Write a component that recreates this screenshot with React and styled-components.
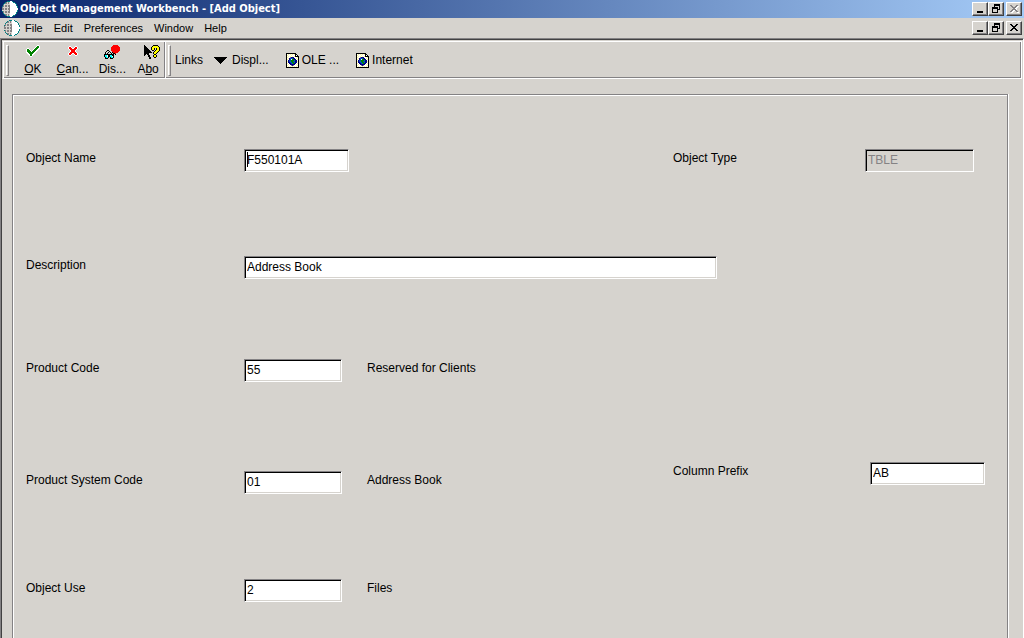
import styled, { createGlobalStyle, css } from 'styled-components';

const GlobalStyle = createGlobalStyle`
    * {
        box-sizing: border-box;
    }

    html, body, #root {
        height: 100%;
        margin: 0;
    }

    body {
        overflow: hidden;
        background-color: #D6D3CE;
        color: #000000;
        font-family: "Liberation Sans", Arial, sans-serif;
        font-size: 12px;
    }
`

const Window = styled.div`
    display: flex;
    flex-direction: column;
    height: 100%;
`

const TitleBar = styled.header`
    display: flex;
    align-items: center;
    height: 18px;
    padding: 0 2px;
    background: linear-gradient(90deg, #08246B, #A5CBF7);
`

const Title = styled.h1`
    flex: 1;
    margin: 0;
    padding-left: 2px;
    color: #FFFFFF;
    font-family: "DejaVu Sans Condensed", "DejaVu Sans", sans-serif;
    font-size: 11px;
    font-weight: 700;
    line-height: 18px;
    white-space: nowrap;
`

const MenuBar = styled.nav`
    display: flex;
    align-items: center;
    height: 20px;
    padding: 0 2px 0 4px;
`

const MenuItem = styled.button`
    margin: 0;
    padding: 0 6px 0 5px;
    border: none;
    background: none;
    color: #000000;
    font: 11px/18px "Liberation Sans", Arial, sans-serif;
`

const WindowControls = styled.div`
    display: flex;
    margin-left: auto;
`

const ControlButton = styled.button`
    width: 16px;
    height: 14px;
    margin-left: ${({ $apart }) => ($apart ? '2px' : '0')};
    padding: 0;
    border: 1px solid;
    border-color: #FFFFFF #404040 #404040 #FFFFFF;
    box-shadow: inset -1px -1px 0 #848284;
    background-color: #D6D3CE;
    line-height: 0;
`

const Workspace = styled.div`
    flex: 1;
    min-height: 0;
    display: flex;
    flex-direction: column;
    border-top: 1px solid #848284;
    border-left: 1px solid #848284;
    border-right: 1px solid #FFFFFF;
`

const Frame = styled.div`
    flex: 1;
    min-height: 0;
    display: flex;
    flex-direction: column;
    border-top: 1px solid #424142;
    border-left: 1px solid #424142;
    padding-top: 1px;
`

const ToolBar = styled.div`
    display: flex;
    height: 38px;
    margin-right: 1px;
    border: 1px solid;
    border-color: #FFFFFF #FFFFFF #FFFFFF #D6D3CE;
    box-shadow: inset -1px -1px 0 #848284;
`

const Band = styled.div`
    display: flex;
    align-items: center;
    padding-left: 2px;
    border-left: 1px solid #FFFFFF;
    ${({ $divided }) => $divided && css`
        width: 162px;
        border-right: 1px solid #848284;
    `}
`

const Grip = styled.span`
    width: 3px;
    height: 31px;
    border: 1px solid;
    border-color: #FFFFFF #848284 #848284 #FFFFFF;
`

const ToolButton = styled.button`
    display: flex;
    flex-direction: column;
    align-items: center;
    width: ${({ $clipped }) => ($clipped ? '32px' : '40px')};
    margin: 0;
    margin-left: ${({ $first }) => ($first ? '4px' : '0')};
    padding: 0;
    border: none;
    background: none;
    color: #000000;
    font: 12px/16px "Liberation Sans", Arial, sans-serif;
    white-space: nowrap;

    svg {
        height: 16px;
        margin-bottom: 1px;
        margin-left: ${({ $clipped }) => ($clipped ? '8px' : '0')};
    }
`

const LinksLabel = styled.span`
    padding: 0 11px 0 4px;
`

const LinkButton = styled.button`
    display: flex;
    align-items: center;
    gap: ${({ $menu }) => ($menu ? '5px' : '3px')};
    margin: 0 17px 0 0;
    padding: 0;
    border: none;
    background: none;
    color: #000000;
    font: 12px/16px "Liberation Sans", Arial, sans-serif;
`

const Panel = styled.form`
    flex: 1;
    min-height: 0;
    margin: 15px 15px 0 10px;
    border: 1px solid #848284;
    border-bottom: none;
    box-shadow: inset 1px 1px 0 #FFFFFF, 1px 0 0 #FFFFFF;
    padding: 54px 21px 0 13px;
    overflow: hidden;
`

const Rows = styled.div`
    display: grid;
    grid-template-rows: 107px 103px 103px 117px 40px;
`

const Row = styled.div`
    display: flex;
    align-items: flex-start;
    justify-content: space-between;
`

const Field = styled.div`
    display: flex;
    padding-top: ${({ $lowered }) => ($lowered ? '9px' : '0')};
`

const SideField = styled.div`
    display: flex;
    width: 313px;
`

const Label = styled.label`
    width: ${({ $width }) => $width}px;
    line-height: 18px;
`

const TextBox = styled.input`
    width: ${({ $width }) => $width}px;
    height: 23px;
    margin: 0;
    padding: 0 1px 2px 2px;
    border: 1px solid;
    border-color: #848284 #FFFFFF #FFFFFF #848284;
    border-radius: 0;
    outline: none;
    box-shadow: inset 1px 1px 0 #000000, inset -1px -1px 0 #D6D3CE;
    background-color: #FFFFFF;
    color: #000000;
    font: 12px/18px "Liberation Sans", Arial, sans-serif;

    &:disabled {
        background-color: #D6D3CE;
        color: #848284;
    }

    ${({ $caret }) => $caret && css`
        background-image: linear-gradient(#000000, #000000);
        background-position: 2px 2px;
        background-size: 1px 15px;
        background-repeat: no-repeat;
    `}
`

const Hint = styled.span`
    padding-left: 25px;
    line-height: 18px;
`

const pixelColors = {
    k: '#000000',
    r: '#FF0000',
    w: '#FFFFFF',
    g: '#008200',
    y: '#FFFF00',
    p: '#FFF79C',
    c: '#00FFFF',
    b: '#000084',
    l: '#0041C6',
    t: '#008284',
    s: '#848284',
    d: '#D6D3CE',
};

function PixelIcon({ rows }) {
    const width = Math.max(...rows.map((row) => row.length));

    return (
        <svg width={width} height={rows.length} viewBox={`0 0 ${width} ${rows.length}`} shapeRendering="crispEdges" aria-hidden="true">
            {rows.map((row, y) => [...row].map((pixel, x) => (
                pixelColors[pixel] && <rect key={`${x}-${y}`} x={x} y={y} width="1" height="1" fill={pixelColors[pixel]} />
            )))}
        </svg>
    );
}

const globe = [
    '.....tttwwt.....',
    '...tsdsdwwwtt...',
    '..tssdsdwwwwwt..',
    '.tddddddwwwwwwt.',
    '.sdssdsswwwwwwt.',
    'tsdssdsswwwwwwwt',
    'sddddddswwwwwwwt',
    'ssdssdsswwwwwwww',
    'ssdssdsswwwwwwww',
    'dddddddswwwwwwwt',
    'tsdssdsswwwwwwwt',
    '.sdssdsswwwwwwt.',
    '.tddddddwwwwwwt.',
    '..tssdsdwwwwwt..',
    '...tsdsdwwwtt...',
    '.....tttwwt.....',
];

const check = [
    '...........ww.',
    '..........wggw',
    '.........wgggw',
    '.ww.....wgggww',
    'wggw...wgggww.',
    'wgggw.wgggww..',
    'wggggwgggww...',
    'wwggggggww....',
    '.wwggggww.....',
    '..wwggww......',
    '...wggw.......',
    '....ww........',
    '..............',
    '..............',
];

const cross = [
    '..........',
    '.ww....ww.',
    'wrrw..wrrw',
    'wrrrwwrrrw',
    '.wrrrrrrw.',
    '..wrrrrw..',
    '..wrrrrw..',
    '.wrrrrrrw.',
    'wrrrwwrrrw',
    'wrrw..wrrw',
    '.ww....ww.',
    '..........',
    '..........',
    '..........',
];

const glasses = [
    '.........rrrrr..',
    '........rrrrrrr.',
    '.......rrrrrrrrr',
    '.......rrrrrrrrr',
    '.......rrrrrrrrr',
    '...kk..rrrrrrrrr',
    '..k..k..rrrrrrr.',
    '.k..k.k.krrrrr..',
    '.k.k...k.kkr....',
    'kkkkkkkkkk.k....',
    'kccwkkcckk......',
    'kccwkkccwk......',
    '.kcck.kcck......',
    '.kkk..kkk.......',
];

const helpPointer = [
    'k........kkkkk..',
    'kk......kyyyyyk.',
    'kkk....kyyyyyyyk',
    'kkkk...kyyk.kyyk',
    'kkkkk..kyyk.kyyk',
    'kkkkkk..kk.kyyyk',
    'kkkkkkk...kyyyk.',
    'kkkkkkkk.kyyyk..',
    'kkkkk....kyyk...',
    'kk.kk.....kk....',
    'k...kk...kyyk...',
    '....kk...kyyk...',
    '.....kk...kk....',
    '.....kk.........',
];

const page = [
    'kkkkkkkkkk...',
    'kwpwpwpwpkk..',
    'kpwwwpwwwkwk.',
    'kwpwpwpwpkkkk',
    'kpwwsbbbwwwpk',
    'kwpblltbbwpwk',
    'kpwblwggbbwpk',
    'kwbllgggtbbwk',
    'kpbltggllbbpk',
    'kwbbllggtbbwk',
    'kpwbbltgbbwpk',
    'kwpwbbbbbwpwk',
    'kpwwwsbswwwpk',
    'kwpwpwpwpwpwk',
    'kkkkkkkkkkkkk',
];

const arrowDown = [
    'kkkkkkkkkkkkk',
    '.kkkkkkkkkkk.',
    '..kkkkkkkkk..',
    '...kkkkkkk...',
    '....kkkkk....',
    '.....kkk.....',
    '......k......',
];

const minimize = [
    '..........',
    '..........',
    '..........',
    '..........',
    '..........',
    '..........',
    '..........',
    '..kkkkkk..',
    '..kkkkkk..',
    '..........',
];

const restore = [
    '...kkkkkk.',
    '...kkkkkk.',
    '...k....k.',
    '.kkkkkk.k.',
    '.kkkkkk.k.',
    '.k....kkk.',
    '.k....k...',
    '.k....k...',
    '.kkkkkk...',
    '..........',
];

const close = [
    '..........',
    '.kk....kk.',
    '..kk..kk..',
    '...kkkk...',
    '....kk....',
    '...kkkk...',
    '..kk..kk..',
    '.kk....kk.',
    '..........',
    '..........',
];

const closeGrayed = [
    '..........',
    '.ss....ss.',
    '..ss..ssww',
    '...ssssww.',
    '....ssww..',
    '...ssssw..',
    '..sswwss..',
    '.ssww..ss.',
    '..ww....ww',
    '..........',
];

const menus = ['File', 'Edit', 'Preferences', 'Window', 'Help'];

function Controls({ closeIcon, closeDisabled }) {
    return (
        <WindowControls>
            <ControlButton type="button" aria-label="Minimize"><PixelIcon rows={minimize} /></ControlButton>
            <ControlButton type="button" aria-label="Restore"><PixelIcon rows={restore} /></ControlButton>
            <ControlButton type="button" aria-label="Close" $apart disabled={closeDisabled}><PixelIcon rows={closeIcon} /></ControlButton>
        </WindowControls>
    );
}

function FormField({ id, label, value, width, hint, lowered, caret }) {
    return (
        <Field $lowered={lowered}>
            <Label htmlFor={id} $width={218}>{label}</Label>
            <TextBox id={id} defaultValue={value} $width={width} $caret={caret} />
            {hint && <Hint>{hint}</Hint>}
        </Field>
    );
}

function App() {
    return (
        <>
            <GlobalStyle />
            <Window>
                <TitleBar>
                    <PixelIcon rows={globe} />
                    <Title>Object Management Workbench - [Add Object]</Title>
                    <Controls closeIcon={closeGrayed} closeDisabled />
                </TitleBar>
                <MenuBar>
                    <PixelIcon rows={globe} />
                    {menus.map((menu) => <MenuItem key={menu} type="button">{menu}</MenuItem>)}
                    <Controls closeIcon={close} />
                </MenuBar>
                <Workspace>
                    <Frame>
                        <ToolBar>
                            <Band $divided>
                                <Grip />
                                <ToolButton type="button" $first><PixelIcon rows={check} /><span><u>O</u>K</span></ToolButton>
                                <ToolButton type="button"><PixelIcon rows={cross} /><span><u>C</u>an...</span></ToolButton>
                                <ToolButton type="button"><PixelIcon rows={glasses} /><span>Dis...</span></ToolButton>
                                <ToolButton type="button" $clipped><PixelIcon rows={helpPointer} /><span>A<u>b</u>o</span></ToolButton>
                            </Band>
                            <Band>
                                <Grip />
                                <LinksLabel>Links</LinksLabel>
                                <LinkButton type="button" $menu><PixelIcon rows={arrowDown} />Displ...</LinkButton>
                                <LinkButton type="button"><PixelIcon rows={page} />OLE ...</LinkButton>
                                <LinkButton type="button"><PixelIcon rows={page} />Internet</LinkButton>
                            </Band>
                        </ToolBar>
                        <Panel>
                            <Rows>
                                <Row>
                                    <FormField id="objectName" label="Object Name" value="F550101A" width={105} caret />
                                    <SideField>
                                        <Label htmlFor="objectType" $width={192}>Object Type</Label>
                                        <TextBox id="objectType" defaultValue="TBLE" $width={109} disabled />
                                    </SideField>
                                </Row>
                                <Row>
                                    <FormField id="description" label="Description" value="Address Book" width={473} />
                                </Row>
                                <Row>
                                    <FormField id="productCode" label="Product Code" value="55" width={98} hint="Reserved for Clients" />
                                </Row>
                                <Row>
                                    <FormField id="systemCode" label="Product System Code" value="01" width={98} hint="Address Book" lowered />
                                    <SideField>
                                        <Label htmlFor="columnPrefix" $width={197}>Column Prefix</Label>
                                        <TextBox id="columnPrefix" defaultValue="AB" $width={115} />
                                    </SideField>
                                </Row>
                                <Row>
                                    <FormField id="objectUse" label="Object Use" value="2" width={98} hint="Files" />
                                </Row>
                            </Rows>
                        </Panel>
                    </Frame>
                </Workspace>
            </Window>
        </>
    );
}

export default App;
